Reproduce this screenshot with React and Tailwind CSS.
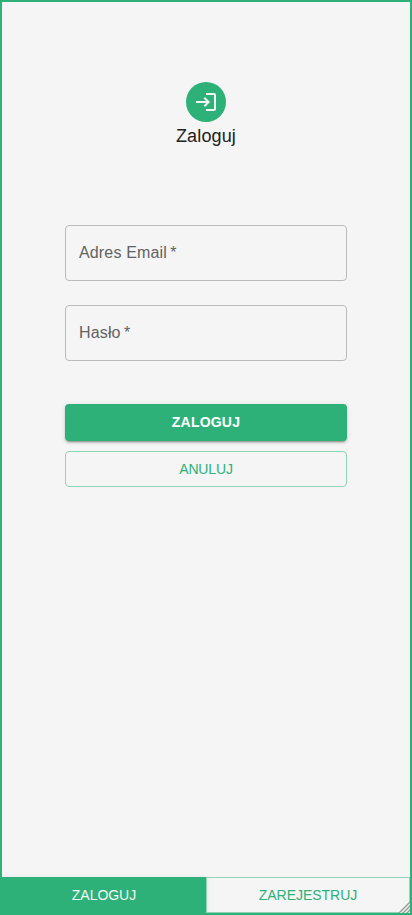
import React from 'react';

function LoginIcon() {
  return (
    <svg className="h-6 w-6 fill-current" viewBox="0 0 24 24">
      <path d="M11 7 9.6 8.4l2.6 2.6H2v2h10.2l-2.6 2.6L11 17l5-5-5-5zm9 12h-8v2h8c1.1 0 2-.9 2-2V5c0-1.1-.9-2-2-2h-8v2h8v14z" />
    </svg>
  );
}

function Field({ label }) {
  return (
    <label className="flex h-14 items-center rounded border border-[#bbbbbb] px-[13px] text-base leading-[23px] tracking-[0.15px] text-[#626262]">
      <span className="-mt-px whitespace-pre">{label}{'\u2009*'}</span>
    </label>
  );
}

export default function App() {
  return (
    <div className="relative flex h-[915px] w-full flex-col overflow-hidden border-2 border-[#2db179] bg-[#f5f5f5] font-['Liberation_Sans',Arial,sans-serif]">
      <main className="flex flex-1 flex-col px-[63px] pt-20">
        <header className="flex flex-col items-center">
          <div className="flex h-10 w-10 items-center justify-center rounded-full bg-[#2db179] text-[#f5f5f5]">
            <LoginIcon />
          </div>
          <h1 className="text-lg leading-7 tracking-[0.14px] text-[#212121]">Zaloguj</h1>
        </header>
        <form className="mt-[75px] flex flex-col gap-6">
          <Field label="Adres Email" />
          <Field label="Hasło" />
          <div className="mt-[19px] flex flex-col gap-[10px]">
            <button type="button" className="h-[36.5px] rounded bg-[#2db179] text-sm leading-[24.5px] font-bold tracking-[0.2px] text-white shadow-[0_3px_1px_-2px_rgba(0,0,0,0.2),0_2px_2px_0_rgba(0,0,0,0.14),0_1px_5px_0_rgba(0,0,0,0.12)]">
              ZALOGUJ
            </button>
            <button type="button" className="h-[36.5px] rounded border border-[#91d3b5] text-sm leading-[24.5px] tracking-[-0.15px] text-[#2db179]">
              ANULUJ
            </button>
          </div>
        </form>
      </main>
      <nav className="flex h-9 text-sm tracking-[-0.03px]">
        <button type="button" className="w-1/2 bg-[#2db179] text-[#f5f5f5] shadow-[0_3px_1px_-2px_rgba(0,0,0,0.2),0_2px_2px_0_rgba(0,0,0,0.14),0_1px_5px_0_rgba(0,0,0,0.12)]">
          ZALOGUJ
        </button>
        <button type="button" className="w-1/2 border border-[#91d3b5] text-[#2db179]">
          ZAREJESTRUJ
        </button>
      </nav>
      <svg className="absolute -right-0.5 -bottom-0.5 h-[15px] w-[15px]" viewBox="0 0 15 15" fill="none">
        <path d="M3 13.5 13.5 3M7 13.5 13.5 7M11 13.5l2.5-2.5" stroke="#eeeeee" strokeWidth="1.8" />
        <path d="M1.5 13.5l12-12M5.5 13.5l8-8M9.5 13.5l4-4" stroke="#999999" strokeWidth="1.3" />
      </svg>
    </div>
  );
}
